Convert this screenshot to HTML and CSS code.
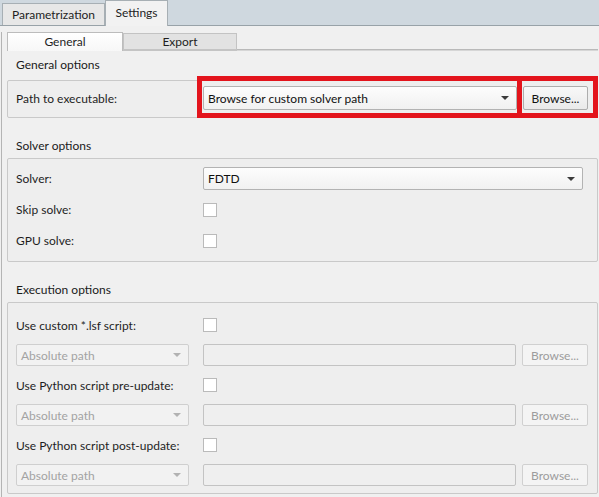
FILE: index.html
```html
<!DOCTYPE html>
<html>
<head>
<meta charset="utf-8">
<link rel="stylesheet" href="styles.css">
</head>
<body>
<div class="tabbar">
  <div class="tab">Parametrization</div>
  <div class="tab active">Settings</div>
</div>
<div class="page">
  <div class="subtabs">
    <div class="subtab active">General</div>
    <div class="subtab">Export</div>
    <div class="subtab-fill"></div>
  </div>

  <div class="title first">General options</div>
  <div class="group g1">
    <div class="row r-path">
      <div class="label">Path to executable:</div>
      <div class="combo"><span>Browse for custom solver path</span><span class="arrow"></span></div>
      <div class="btn">Browse...</div>
    </div>
    <div class="hl hl1"></div>
    <div class="hl hl2"></div>
  </div>

  <div class="title">Solver options</div>
  <div class="group g2">
    <div class="row r-solver">
      <div class="label">Solver:</div>
      <div class="combo"><span>FDTD</span><span class="arrow"></span></div>
    </div>
    <div class="row r-check">
      <div class="label">Skip solve:</div>
      <div class="check"></div>
    </div>
    <div class="row r-check">
      <div class="label">GPU solve:</div>
      <div class="check"></div>
    </div>
  </div>

  <div class="title">Execution options</div>
  <div class="group g3">
    <div class="row r-check">
      <div class="label">Use custom *.lsf script:</div>
      <div class="check"></div>
    </div>
    <div class="row r-file">
      <div class="combo dis"><span>Absolute path</span><span class="arrow"></span></div>
      <div class="field"></div>
      <div class="btn dis">Browse...</div>
    </div>
    <div class="row r-check">
      <div class="label">Use Python script pre-update:</div>
      <div class="check"></div>
    </div>
    <div class="row r-file">
      <div class="combo dis"><span>Absolute path</span><span class="arrow"></span></div>
      <div class="field"></div>
      <div class="btn dis">Browse...</div>
    </div>
    <div class="row r-check">
      <div class="label">Use Python script post-update:</div>
      <div class="check"></div>
    </div>
    <div class="row r-file">
      <div class="combo dis"><span>Absolute path</span><span class="arrow"></span></div>
      <div class="field"></div>
      <div class="btn dis">Browse...</div>
    </div>
  </div>
</div>
</body>
</html>
```

FILE: styles.css
```css
* { box-sizing: border-box; }

body {
  margin: 0;
  width: 599px;
  height: 497px;
  overflow: hidden;
  background: #f0f0f0;
  font-family: Lato, "Noto Sans", sans-serif;
  font-size: 12px;
  color: #1e1e1e;
}

/* top tabs */
.tabbar {
  height: 26px;
  background: #cfd8df;
  border-bottom: 1px solid #98a2a8;
  display: flex;
  align-items: flex-end;
  padding-left: 2px;
}
.tab {
  width: 103px;
  height: 22px;
  border: 1px solid #a7afb4;
  border-bottom: none;
  background: #e7e7e7;
  display: flex;
  align-items: center;
  justify-content: center;
  color: #1e1e1e;
}
.tab.active {
  width: 63px;
  height: 26px;
  margin-bottom: -1px;
  background: #f2f2f2;
  position: relative;
  z-index: 1;
  padding-bottom: 2px;
}

/* page */
.page {
  margin-left: 1px;
  border-left: 1px solid #b4b4b4;
  padding: 0 1px 0 5px;
  height: 471px;
}

.subtabs {
  margin-top: 6px;
  height: 19px;
  display: flex;
  align-items: flex-end;
}
.subtab {
  width: 114px;
  height: 18px;
  border: 1px solid #c3c3c3;
  border-bottom: 2px solid #c4c4c4;
  background: #e2e2e2;
  display: flex;
  align-items: center;
  justify-content: center;
  line-height: 1;
}
.subtab.active {
  width: 116px;
  height: 19px;
  border-color: #bcbcbc;
  border-bottom: none;
  background: linear-gradient(#ffffff, #f7f7f7);
}
.subtab-fill {
  flex: 1;
  height: 2px;
  border-top: 1px solid #b9b9b9;
  border-bottom: 1px solid #d6d6d6;
}

.title {
  height: 22px;
  line-height: 22px;
  padding-left: 9px;
  margin-top: 17px;
  margin-bottom: 1px;
  color: #1a1a1a;
}
.title.first {
  margin-top: 3px;
  margin-bottom: 4px;
}

.group {
  border: 1px solid #c9c9c9;
  border-radius: 2px;
  background: #eeeeee;
  display: flex;
  flex-direction: column;
  gap: 8px;
  padding: 0 8px;
}
.g1 { padding-top: 5px; padding-bottom: 7px; position: relative; }
.g2 { padding-top: 8px; padding-bottom: 9px; }
.g3 { padding-top: 11px; padding-bottom: 7px; }

.row {
  display: flex;
  align-items: center;
}
.r-path { height: 24px; }
.r-solver { height: 23px; }
.g2 .r-check { height: 23px; }
.g3 .r-check, .r-file { height: 22px; }

.label {
  width: 187px;
  flex: none;
}

.combo {
  height: 100%;
  border: 1px solid #b3b3b3;
  border-radius: 2px;
  background: linear-gradient(#fdfdfd, #f1f1f1);
  display: flex;
  align-items: center;
  padding-left: 4px;
  color: #111;
}
.r-path .combo { width: 314px; }
.r-solver .combo { width: 380px; }
.arrow {
  margin-left: auto;
  margin-right: 7px;
  width: 0;
  height: 0;
  border-left: 4px solid transparent;
  border-right: 4px solid transparent;
  border-top: 4px solid #3c3c3c;
}

.btn {
  height: 100%;
  border: 1px solid #adadad;
  border-radius: 2px;
  background: linear-gradient(#f8f8f8, #eaeaea);
  display: flex;
  align-items: center;
  justify-content: center;
  color: #111;
}
.r-path .btn { width: 65px; margin-left: 6px; }

.check {
  width: 14px;
  height: 14px;
  background: #ffffff;
  border: 1px solid #bababa;
}

.combo.dis {
  width: 173px;
  margin-right: 14px;
  border-color: #cfcfcf;
  background: #f2f2f2;
  color: #a3a3a3;
}
.combo.dis .arrow { border-top-color: #b2b2b2; margin-right: 7px; }

.field {
  width: 313px;
  height: 100%;
  border: 1px solid #c3c3c3;
  border-radius: 2px;
  background: #efefef;
  margin-right: 6px;
}
.btn.dis {
  width: 66px;
  border-color: #d0d0d0;
  background: #f4f4f4;
  color: #9c9c9c;
}

/* red annotation boxes */
.hl {
  position: absolute;
  top: -5px;
  height: 42px;
  border: 5px solid #e3141c;
  z-index: 2;
}
.hl1 { left: 189px; width: 325px; }
.hl2 { left: 509px; width: 81px; }
```
